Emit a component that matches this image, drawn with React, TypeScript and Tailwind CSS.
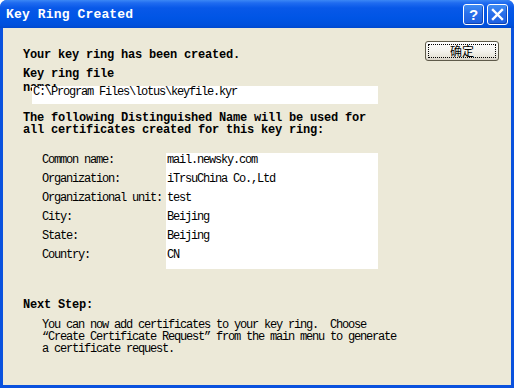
import React from "react";

const mono = { fontFamily: '"Liberation Mono", "Noto Sans CJK SC", monospace' };

function TitleButton({ children }: { children: React.ReactNode }) {
  return (
    <div className="w-[21px] h-[21px] rounded-[3px] border border-white bg-[linear-gradient(to_bottom,#3F8CF3_0%,#2A6FEA_45%,#1D5FE0_100%)] flex items-center justify-center shadow-[inset_-1px_-1px_0_rgba(0,40,140,0.5)]">
      {children}
    </div>
  );
}

export default function App() {
  const rows: [string, string][] = [
    ["Common name:", "mail.newsky.com"],
    ["Organization:", "iTrsuChina Co.,Ltd"],
    ["Organizational unit:", "test"],
    ["City:", "Beijing"],
    ["State:", "Beijing"],
    ["Country:", "CN"],
  ];
  const normal = "text-[12px] tracking-[-1.2px] leading-[12px] text-black";
  const bold = "text-[12px] font-bold tracking-[-0.2px] leading-[12px] text-black";
  return (
    <div className="w-[514px] h-[388px] flex flex-col bg-[#0A52DE] rounded-t-[7px] overflow-hidden" style={mono}>
      <div className="h-[28px] flex items-center pl-[6px] pr-[6px] bg-[linear-gradient(to_bottom,#3B87F5_0px,#1F6BF0_3px,#0858E8_8px,#0055E5_18px,#0050DC_25px,#0049CF_28px)]">
        <div className="flex-1 text-white text-[13px] font-bold tracking-[0.15px] leading-[13px] pt-[1px]">Key Ring Created</div>
        <div className="flex gap-[3px] items-center">
          <TitleButton>
            <span className="text-white font-bold text-[15px] leading-none" style={{ fontFamily: '"Liberation Sans", sans-serif' }}>?</span>
          </TitleButton>
          <TitleButton>
            <svg width="13" height="13" viewBox="0 0 13 13">
              <path d="M2 2 L11 11 M11 2 L2 11" stroke="white" strokeWidth="2.4" strokeLinecap="square" />
            </svg>
          </TitleButton>
        </div>
      </div>
      <div className="flex-1 mx-[3px] mb-[3px] bg-[#ECE9D8] flex items-start">
        <div className="flex-1 pt-[21px] pl-[20px]">
          <p className={bold}>Your key ring has been created.</p>
          <p className={bold + " mt-[7px]"}>Key ring file</p>
          <p className={bold + " mt-[2px]"}>name:</p>
          <div className={"relative -mt-[8px] ml-[9px] w-[346px] h-[18px] bg-white pl-[1px] " + normal}>
            C:\Program Files\lotus\keyfile.kyr
          </div>
          <p className={bold + " mt-[8px]"}>
            The following Distinguished Name will be used for
            <br />
            all certificates created for this key ring:
          </p>
          <div className="mt-[15px] ml-[19px] flex items-start">
            <div className="w-[124px]">
              {rows.map(([l]) => (
                <div key={l} className={normal + " leading-[19px] h-[19px] whitespace-nowrap"}>
                  {l}
                </div>
              ))}
            </div>
            <div className="w-[212px] h-[116px] mt-[2px] bg-white">
              <div className="-mt-[2px] pl-[1px]">
                {rows.map(([l, v]) => (
                  <div key={l} className={normal + " leading-[19px] h-[19px] whitespace-nowrap"}>
                    {v}
                  </div>
                ))}
              </div>
            </div>
          </div>
          <p className={bold + " mt-[30px]"}>Next Step:</p>
          <p className={normal + " mt-[8px] ml-[19px] whitespace-pre"}>
            {"You can now add certificates to your key ring.  Choose\n\u201CCreate Certificate Request\u201D from the main menu to generate\na certificate request."}
          </p>
        </div>
        <div className="pt-[13px] pr-[12px]">
          <div className="w-[74px] h-[20px] rounded-[3px] border border-[#5E5A4A] bg-[linear-gradient(to_bottom,#FFFFFF_0%,#F4F3EE_50%,#E6E3D8_85%,#D6D0C5_100%)] p-[2px]">
            <div className="w-full h-full border border-dotted border-black flex items-center justify-center">
              <span className="text-[12px] leading-[12px] text-black" style={{ fontFamily: '"Noto Sans CJK SC", sans-serif' }}>确定</span>
            </div>
          </div>
        </div>
      </div>
    </div>
  );
}
